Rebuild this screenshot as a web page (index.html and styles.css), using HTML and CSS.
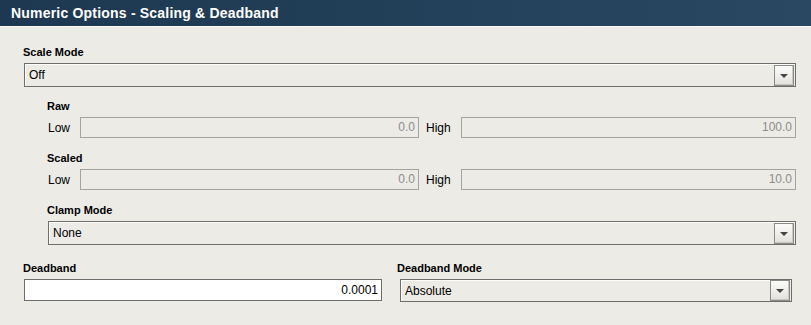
FILE: index.html
```html
<!DOCTYPE html>
<html lang="en">
<head>
  <meta charset="UTF-8"/>
  <title>Numeric Options - Scaling &amp; Deadband</title>
  <link rel="stylesheet" href="styles.css">
</head>
<body>
  <div class="header">Numeric Options - Scaling &amp; Deadband</div>

  <div class="content">
    <div class="label">Scale Mode</div>
    <div class="combo">
      <span class="combo-text">Off</span>
      <span class="arrow"></span>
    </div>

    <div class="indent">
      <div class="label group">Raw</div>
      <div class="range">
        <span class="small">Low</span>
        <div class="num disabled">0.0</div>
        <span class="small">High</span>
        <div class="num disabled">100.0</div>
      </div>

      <div class="label group">Scaled</div>
      <div class="range">
        <span class="small">Low</span>
        <div class="num disabled">0.0</div>
        <span class="small">High</span>
        <div class="num disabled">10.0</div>
      </div>

      <div class="label group">Clamp Mode</div>
      <div class="combo">
        <span class="combo-text">None</span>
        <span class="arrow"></span>
      </div>
    </div>

    <div class="bottom">
      <div>
        <div class="label">Deadband</div>
        <div class="num editable">0.0001</div>
      </div>
      <div>
        <div class="label shift">Deadband Mode</div>
        <div class="combo">
          <span class="combo-text">Absolute</span>
          <span class="arrow"></span>
        </div>
      </div>
    </div>
  </div>
</body>
</html>
```

FILE: styles.css
```css
:root {
  --bg: #ecebe6;
  --border: #6e6e6e;
  --border-off: #a3a3a0;
  --muted: #8c8c8c;
}

* {
  box-sizing: border-box;
  margin: 0;
  padding: 0;
}

body {
  font-family: 'Liberation Sans', Arial, sans-serif;
  font-size: 12px;
  background: var(--bg);
  color: #000;
  width: 811px;
  height: 325px;
  overflow: hidden;
}

.header {
  height: 27px;
  padding: 5px 0 0 11px;
  background: linear-gradient(to right, #1d3850, #294862);
  border-bottom: 1px solid #fafaf6;
  color: #fff;
  font-weight: bold;
  font-size: 14px;
  letter-spacing: 0.2px;
  line-height: 16px;
}

.content {
  padding: 18px 15px 0 24px;
}

.label {
  font-size: 11px;
  font-weight: bold;
  line-height: 14px;
  height: 14px;
  margin: 0 0 4px -1px;
}

.label.shift {
  margin-left: -3px;
}

.group {
  margin-top: 13px;
}

.indent {
  margin-left: 24px;
}

.indent .group:first-child {
  margin-top: 12px;
}

.combo {
  height: 24px;
  border: 1px solid var(--border);
  box-shadow: inset 1px 1px 0 #fdfdfb;
  display: flex;
  align-items: center;
  justify-content: space-between;
  padding: 0 1px 0 4px;
}

.combo-text {
  line-height: 20px;
}

.arrow {
  width: 20px;
  height: 21px;
  border: 1px solid #8a8a88;
  background: linear-gradient(#fbfbf9, #e2e1dc);
  box-shadow: inset -1px -1px 0 #c9c8c3;
  position: relative;
}

.arrow::after {
  content: '';
  position: absolute;
  left: 5px;
  top: 8px;
  border-left: 4px solid transparent;
  border-right: 4px solid transparent;
  border-top: 4px solid #444;
}

.range {
  display: grid;
  grid-template-columns: auto 339px auto 1fr;
  align-items: center;
}

.small {
  line-height: 14px;
  margin-right: 10px;
}

.num + .small {
  margin-left: 7px;
}

.num {
  height: 21px;
  line-height: 19px;
  text-align: right;
  padding-right: 3px;
  border: 1px solid var(--border-off);
}

.disabled {
  color: var(--muted);
}

.editable {
  height: 22px;
  line-height: 20px;
  background: #fff;
  border-color: var(--border);
}

.bottom {
  display: grid;
  grid-template-columns: 358px 1fr;
  column-gap: 18px;
  margin: 16px 4px 0 0;
}

.bottom .combo {
  height: 23px;
}
```
